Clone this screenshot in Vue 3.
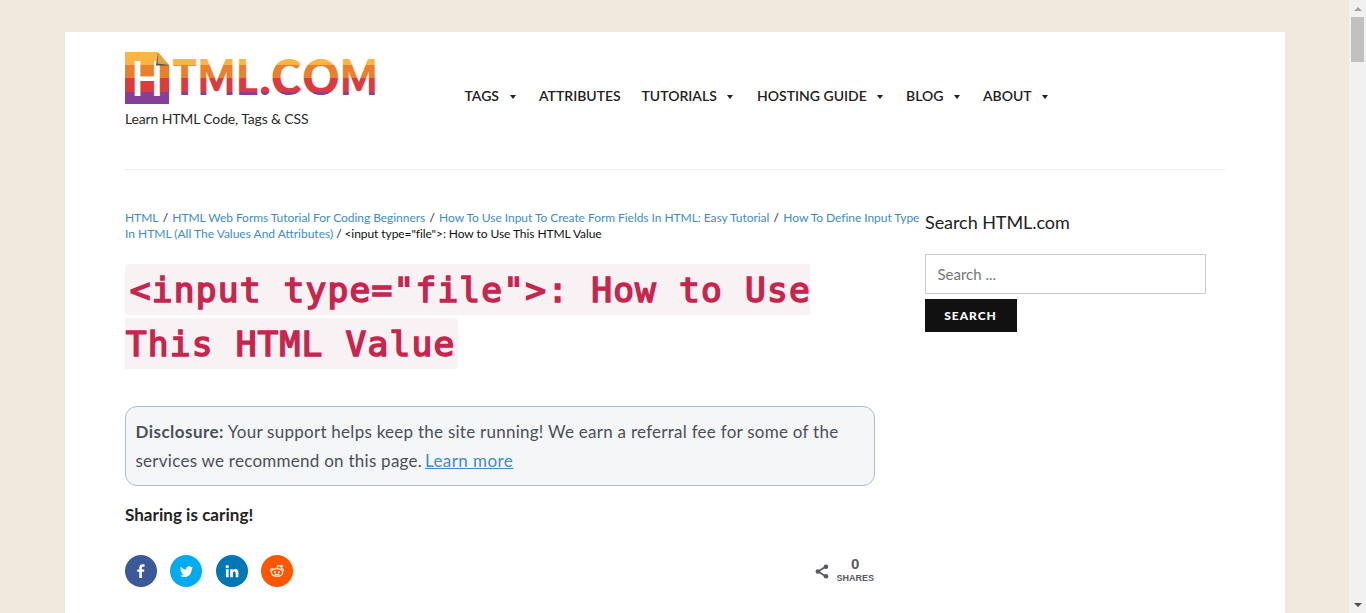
<script setup>
const nav = [
  { label: 'TAGS', width: 74.5, menu: true },
  { label: 'ATTRIBUTES', width: 102.5, menu: false },
  { label: 'TUTORIALS', width: 115.5, menu: true },
  { label: 'HOSTING GUIDE', width: 149, menu: true },
  { label: 'BLOG', width: 77, menu: true },
  { label: 'ABOUT', width: 70, menu: true },
]
const letters = [
  { ch: 'T', x: 47.5, w: 24.3 },
  { ch: 'M', x: 72.8, w: 37.5 },
  { ch: 'L', x: 111.3, w: 21.7 },
  { ch: '.', x: 134.2, w: 11.5 },
  { ch: 'C', x: 146.3, w: 30 },
  { ch: 'O', x: 177.5, w: 36.8 },
  { ch: 'M', x: 215.3, w: 37.2 },
]
</script>

<template>
  <div class="window">
    <div class="viewport">
      <div class="page">
        <header class="header">
          <div class="brand">
            <svg class="logo" width="252" height="54" viewBox="0 0 252 54">
              <defs>
                <linearGradient id="bands" gradientUnits="userSpaceOnUse" x1="0" y1="0" x2="0" y2="52">
                  <stop offset="0.24" stop-color="#fbb545" />
                  <stop offset="0.255" stop-color="#ea7f2d" />
                  <stop offset="0.495" stop-color="#ea7f2d" />
                  <stop offset="0.51" stop-color="#d93b40" />
                  <stop offset="0.765" stop-color="#d93b40" />
                  <stop offset="0.78" stop-color="#863f98" />
                </linearGradient>
              </defs>
              <path d="M0 0H32L44 13.5V52H0Z" fill="url(#bands)" />
              <text class="mark" x="6.5" y="43.500" textLength="31.500" lengthAdjust="spacingAndGlyphs">H</text>
              <path d="M33 .5L44 13.500H31Z" fill="#5a4c38" />
              <path d="M33 .5L44 13L32.500 11.500Z" fill="#dda646" />
              <text
                v-for="(l, i) in letters" :key="i" class="word" :x="l.x" y="43.200"
                :textLength="l.w" lengthAdjust="spacingAndGlyphs" fill="url(#bands)"
              >{{ l.ch }}</text>
            </svg>
            <div class="tagline">Learn HTML Code, Tags &amp; CSS</div>
          </div>
          <nav class="nav">
            <a v-for="n in nav" :key="n.label" :style="{ width: n.width + 'px' }">
              {{ n.label }}<i v-if="n.menu" class="caret"></i>
            </a>
          </nav>
        </header>
        <div class="body">
          <main class="main">
            <div class="crumbs">
              <div class="trail"><a>HTML</a><b>/</b><a>HTML Web Forms Tutorial For Coding Beginners</a><b>/</b><a>How To Use Input To Create Form Fields In HTML: Easy Tutorial</a><b>/</b><a>How To Define Input Type</a></div>
              <div><a>In HTML (All The Values And Attributes)</a><span class="here"> / &lt;input type="file"&gt;: How to Use This HTML Value</span></div>
            </div>
            <h1>
              <code class="first">&lt;input type="file"&gt;: How to Use</code>
              <code class="second">This HTML Value</code>
            </h1>
            <div class="disclosure">
              <strong>Disclosure:</strong> Your support helps keep the site running! We earn a referral fee for some of the<br />services we recommend on this page. <a>Learn more</a>
            </div>
            <div class="caring">Sharing is caring!</div>
            <div class="share">
              <span class="dot fb"><svg width="16" height="16" viewBox="0 0 16 16"><path fill="#fff" d="M11.500 1.300v2.400h-1.400c-.9 0-1.200.4-1.200 1.100v1.600h2.500l-.35 2.400H8.900v6.300H6.300V8.800H4.200V6.400h2.100V4.500c0-2.200 1.300-3.300 3.200-3.300.9 0 1.700.05 2 .1z" /></svg></span>
              <span class="dot tw"><svg width="15" height="15" viewBox="0 0 24 24"><path fill="#fff" d="M22.500 5.500c-.8.350-1.600.6-2.500.7.900-.550 1.580-1.400 1.900-2.400-.84.5-1.770.86-2.750 1.050A4.300 4.300 0 0 0 11.800 8.800C8.200 8.600 5 6.900 2.900 4.300c-1.200 2-.5 4.500 1.350 5.800-.7 0-1.370-.2-1.950-.54 0 2.100 1.500 3.900 3.450 4.300-.65.170-1.300.2-1.950.08.550 1.700 2.150 2.950 4.050 3A8.700 8.700 0 0 1 1.500 18.700C10.500 24.200 20.500 18.300 20.300 8c.86-.7 1.600-1.500 2.200-2.500z" /></svg></span>
              <span class="dot li"><svg width="16" height="16" viewBox="0 0 16 16"><g fill="#fff"><circle cx="3.200" cy="3.700" r="1.600" /><path d="M1.900 6.300h2.700v8H1.900zM6.200 6.300h2.600v1.100c.4-.7 1.300-1.300 2.500-1.300 2.600 0 3.100 1.700 3.100 3.900v4.300h-2.700v-3.900c0-1-.1-2-1.300-2s-1.500.9-1.500 2v3.900H6.200z" /></g></svg></span>
              <span class="dot rd"><svg width="16" height="16" viewBox="0 0 16 16"><g fill="none" stroke="#fff" stroke-width="1.100"><ellipse cx="8" cy="9.500" rx="5.600" ry="3.800" /><path d="M8 5.700L8.800 2.500L11.600 3.200" /><circle cx="12.500" cy="3.400" r=".9" /><path d="M2.700 8.600A1.500 1.500 0 1 1 4.500 6.500M13.300 8.600A1.500 1.500 0 1 0 11.500 6.500M5.700 11Q8 12.500 10.300 11" /></g><circle cx="6" cy="8.900" r="1" fill="#fff" /><circle cx="10" cy="8.900" r="1" fill="#fff" /></svg></span>
              <span class="total">
                <svg width="14" height="16" viewBox="0 0 14 16"><path d="M11 3.500L3 8.500L11 13.500" fill="none" stroke="#59595f" stroke-width="1.700" /><g fill="#59595f"><circle cx="11" cy="3.700" r="2.300" /><circle cx="2.900" cy="8.500" r="2.300" /><circle cx="11" cy="13.300" r="2.300" /></g></svg>
                <span class="count"><strong>0</strong><small>SHARES</small></span>
              </span>
            </div>
          </main>
          <aside class="side">
            <div class="side-title">Search HTML.com</div>
            <div class="field">Search ...</div>
            <div class="button">SEARCH</div>
          </aside>
        </div>
      </div>
    </div>
    <div class="scrollbar">
      <i class="up"></i>
      <div class="thumb"></div>
      <i class="down"></i>
    </div>
  </div>
</template>

<style>
html, body { margin: 0; overflow: hidden; }
</style>

<style scoped>
.window { display: flex; width: 1366px; height: 613px; overflow: hidden; font-family: Lato, sans-serif; color: #222; }
.viewport { width: 1349px; background: #f1e9de; padding: 32px 64px 0 65px; box-sizing: border-box; }
.page { background: #fff; height: 581px; padding: 0 60px; box-sizing: border-box; }
.header { display: flex; height: 137px; border-bottom: 1px solid #ebebeb; }
.brand { width: 339.500px; padding-top: 20px; }
.logo { display: block; overflow: visible; }
.word { font: 800 49px Lato, sans-serif; }
.mark { font: 700 48px Lato, sans-serif; fill: #fff; }
.tagline { font-size: 14px; line-height: 20px; margin-top: 3px; white-space: nowrap; color: #2a2a2a; letter-spacing: -.14px; }
.nav { display: flex; padding-top: 54px; }
.nav a { font-size: 14px; font-weight: 600; line-height: 20px; white-space: nowrap; color: #222; flex: none; }
.caret { display: inline-block; border: 2.500px solid transparent; border-left-width: 3px; border-right-width: 3px; border-top: 4px solid #222; border-bottom: 0; margin-left: 10.500px; vertical-align: 2px; }
.body { display: flex; }
.main { width: 800px; padding-top: 40px; }
.crumbs { font-size: 12px; line-height: 16px; white-space: nowrap; color: #111; }
.crumbs a { color: #428bca; }
.crumbs b { font-weight: 400; margin: 0 4.300px; }
.trail { letter-spacing: -.048px; }
.here { letter-spacing: -.07px; }
h1 { margin: 22px 0 0; display: flex; flex-direction: column; align-items: flex-start; gap: 3px; }
code { box-sizing: border-box; font: 400 34.500px/51px "DejaVu Sans Mono", monospace; letter-spacing: 1.200px; -webkit-text-stroke: 1.600px #c7254e; height: 51px; padding-top: 1px; color: #c7254e; background: #f9f2f4; white-space: pre; }
.first { width: 685px; padding-left: 4.800px; border-radius: 4px 0 0 4px; }
.second { width: 333px; padding-left: .8px; border-radius: 0 4px 4px 0; }
.disclosure { width: 750px; height: 80px; box-sizing: border-box; margin-top: 37px; padding: 10px 9.500px; border: 1px solid #b0b9c7; border-radius: 12px; background: #f5f6f8; color: #4b4f58; font-size: 17px; line-height: 29px; white-space: nowrap; letter-spacing: .26px; }
.disclosure strong { letter-spacing: .45px; }
.disclosure a { color: #428bca; text-decoration: underline; letter-spacing: .42px; margin-left: -1.800px; }
.caring { font-size: 17px; font-weight: 700; line-height: 24px; margin-top: 17px; letter-spacing: .04px; }
.share { display: flex; width: 749px; height: 32px; margin-top: 28px; }
.dot { width: 32px; height: 32px; border-radius: 50%; margin-right: 13.400px; display: flex; align-items: center; justify-content: center; }
.fb { background: #3b5998; }
.tw { background: #00abf0; }
.li { background: #0077b5; }
.rd { background: #ff5700; }
.total { margin-left: auto; display: flex; align-items: center; gap: 7px; color: #59595f; font-family: "Liberation Sans", Arial, sans-serif; }
.count { display: flex; flex-direction: column; align-items: center; }
.count strong { font-size: 15px; line-height: 16px; margin-top: -2px; }
.count small { font-size: 9px; line-height: 12px; font-weight: 700; }
.side-title { font-size: 18px; line-height: 24px; margin-top: 40px; letter-spacing: -.06px; }
.field { box-sizing: border-box; width: 281px; height: 40px; margin-top: 20px; border: 1px solid #ccc; padding-left: 11.500px; font-size: 15px; line-height: 38px; color: #777; }
.button { box-sizing: border-box; padding-right: 1px; width: 92px; height: 33px; margin-top: 5px; background: #111; color: #fff; font-size: 12px; font-weight: 900; letter-spacing: .95px; line-height: 33px; text-align: center; }
.scrollbar { width: 17px; height: 613px; background: #f1f1f1; display: flex; flex-direction: column; align-items: center; }
.thumb { width: 13px; height: 45px; background: #c1c1c1; margin-top: 6px; }
.up { border: 4px solid transparent; border-bottom-color: #a3a3a3; border-top: 0; margin-top: 7px; }
.down { border: 4px solid transparent; border-top-color: #505050; border-bottom: 0; margin-top: auto; margin-bottom: 6px; }
</style>
